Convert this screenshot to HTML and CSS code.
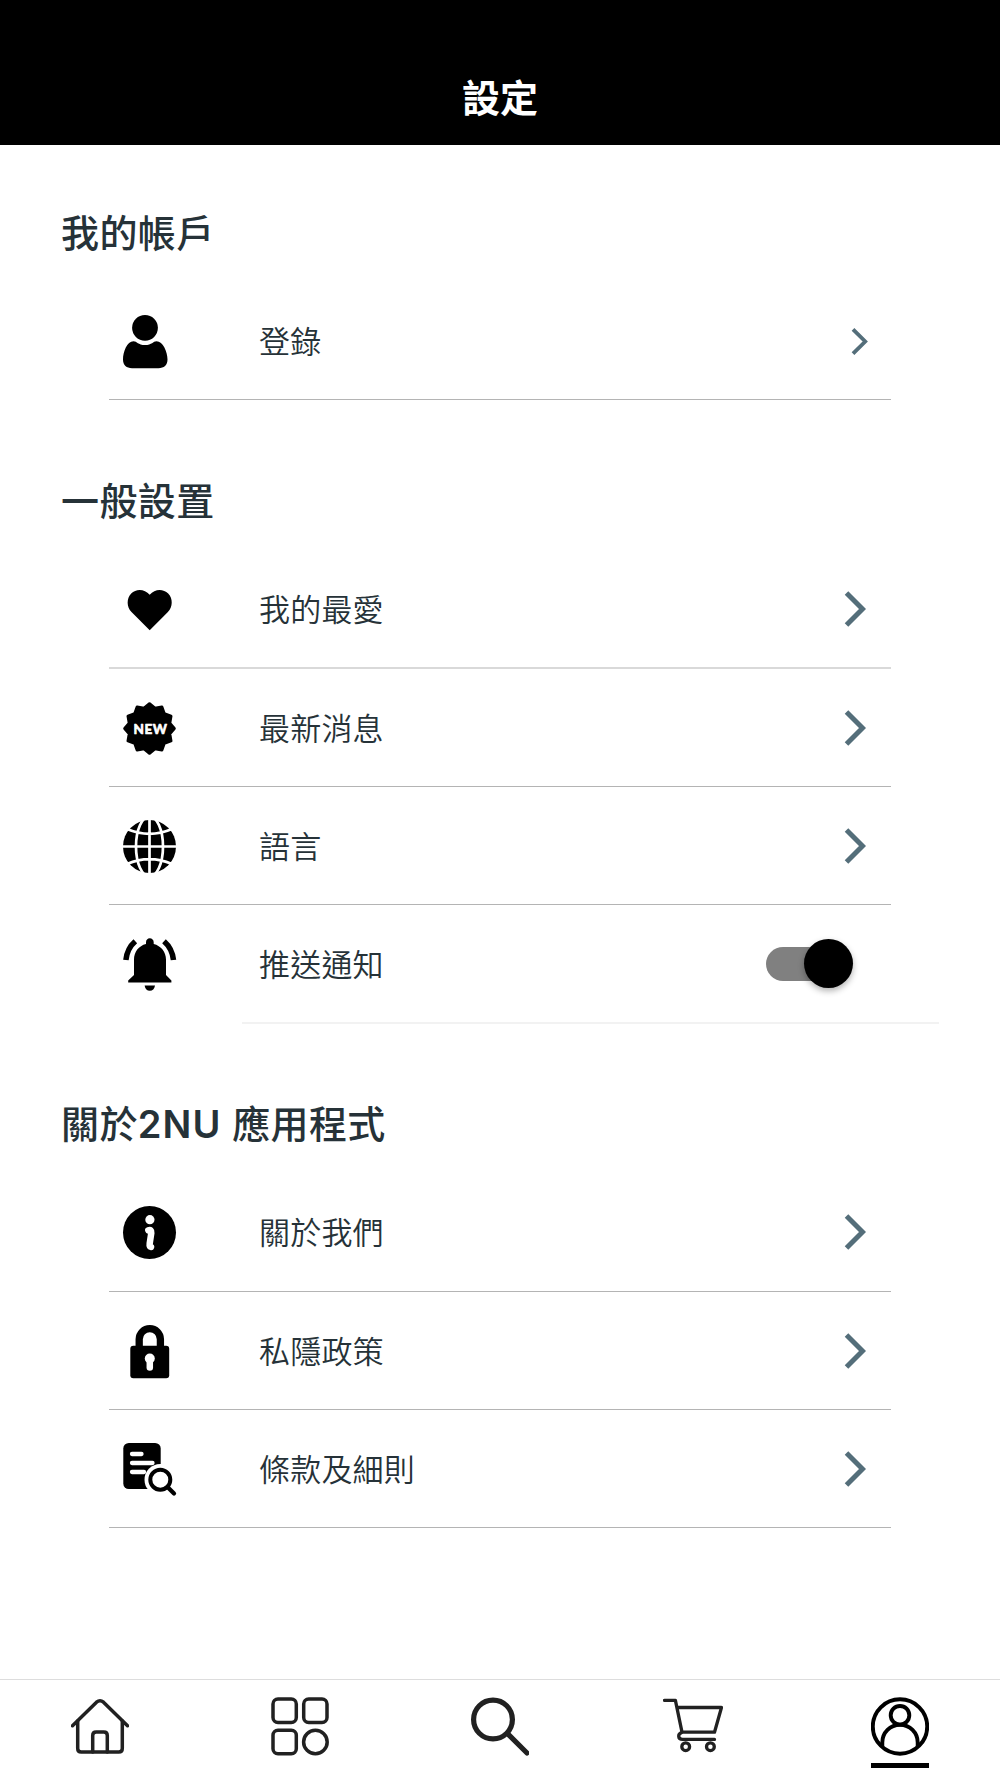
FILE: index.html
```html
<!DOCTYPE html>
<html lang="zh-Hant">
<head>
    <meta charset="UTF-8">
    <meta name="viewport" content="width=device-width, initial-scale=1.0">
    <title>設定</title>
    <link rel="stylesheet" href="styles.css">
</head>
<body>
    <header class="header">
        <h1>設定</h1>
    </header>

    <main class="content">
        <section class="group">
            <h2>我的帳戶</h2>
            <a class="row">
                <svg class="icon" viewBox="0 0 53 53">
                    <ellipse cx="22" cy="12.8" rx="12.9" ry="12.9"/>
                    <path d="M10.500 26.200C14 26.200 15 30 22 30S30 26.200 33.500 26.200C40 26.200 44.500 37 44.500 44.500C44.500 50 41 53.200 35.500 53.200H9C3.500 53.200 0 50 0 44.500C0 37 4 26.200 10.500 26.200Z"/>
                </svg>
                <span class="label">登錄</span>
                <svg class="chevron small" viewBox="0 0 22 38"><path d="M2.500 3L18.500 19L2.500 35"/></svg>
            </a>
        </section>

        <section class="group">
            <h2>一般設置</h2>
            <a class="row soft">
                <svg class="icon" viewBox="0 0 53 53">
                    <path d="M26.700 47.300L8.500 29C3.500 24 3.400 15.500 8.200 10.500S21.500 5.600 26.700 11.700C31.900 5.600 40.300 5.600 45.200 10.500S49.900 24 44.900 29Z"/>
                </svg>
                <span class="label">我的最愛</span>
                <svg class="chevron" viewBox="0 0 22 38"><path d="M2.500 3L18.500 19L2.500 35"/></svg>
            </a>
            <a class="row">
                <svg class="icon" viewBox="0 0 53 53">
                    <polygon class="badge" points="26.5,1.7 31.9,6.2 38.9,5 41.3,11.700 48,14.100 46.800,21.100 51.300,26.500 46.800,31.900 48,38.900 41.300,41.300 38.900,48 31.900,46.800 26.500,51.300 21.100,46.800 14.100,48 11.700,41.300 5,38.900 6.200,31.900 1.700,26.500 6.200,21.100 5,14.100 11.700,11.700 14.100,5 21.100,6.200"/>
                    <text class="badge-text" x="10.500" y="31.500">NEW</text>
                </svg>
                <span class="label">最新消息</span>
                <svg class="chevron" viewBox="0 0 22 38"><path d="M2.500 3L18.500 19L2.500 35"/></svg>
            </a>
            <a class="row">
                <svg class="icon" viewBox="0 0 53 53">
                    <circle cx="26.500" cy="26.500" r="26.500"/>
                    <g class="cut">
                        <path d="M26.500 -1V54M-1 26.500H54M4 9Q26.500 18.600 49 9M4 44Q26.500 34.400 49 44"/>
                        <ellipse cx="26.500" cy="26.500" rx="13.500" ry="30"/>
                    </g>
                </svg>
                <span class="label">語言</span>
                <svg class="chevron" viewBox="0 0 22 38"><path d="M2.500 3L18.500 19L2.500 35"/></svg>
            </a>
            <div class="row last">
                <svg class="icon" viewBox="0 0 53 53">
                    <path d="M26.800 0.300C29 0.300 30.700 2 30.700 4.200V6C38 7.800 43 14 43 21.500V37L48.400 42.600V44.500H5.200V42.600L11 37V21.500C11 14 15.700 7.800 23 6V4.200C23 2 24.600 0.300 26.800 0.300Z"/>
                    <path d="M21.600 47.400H32C31.500 50.800 29.500 52.700 26.800 52.700S22.100 50.800 21.600 47.400Z"/>
                    <path class="ring" d="M2.900 22Q4 10.500 12.300 3.200M50.500 22Q49.300 10.500 41 3.200"/>
                </svg>
                <span class="label">推送通知</span>
                <span class="switch"><span class="thumb"></span></span>
            </div>
        </section>

        <section class="group">
            <h2>關於<span class="brand">2NU</span> 應用程式</h2>
            <a class="row">
                <svg class="icon" viewBox="0 0 53 53">
                    <circle cx="26.500" cy="26.500" r="26.500"/>
                    <circle class="hole" cx="26.900" cy="13.700" r="4.600"/>
                    <path class="info-stem" d="M25.300 24.300Q28.600 23.200 28.300 27L26.700 37.500Q26.300 40.500 28 41"/>
                </svg>
                <span class="label">關於我們</span>
                <svg class="chevron" viewBox="0 0 22 38"><path d="M2.500 3L18.500 19L2.500 35"/></svg>
            </a>
            <a class="row">
                <svg class="icon" viewBox="0 0 53 53">
                    <rect x="7.300" y="20.800" width="38.900" height="32.400" rx="3"/>
                    <path class="shackle" d="M16.200 22V14.200A10.600 10.600 0 0 1 37.400 14.200V22"/>
                    <circle class="hole" cx="26.800" cy="33.500" r="5"/>
                    <path class="keyhole" d="M26.800 34V42.500"/>
                </svg>
                <span class="label">私隱政策</span>
                <svg class="chevron" viewBox="0 0 22 38"><path d="M2.500 3L18.500 19L2.500 35"/></svg>
            </a>
            <a class="row">
                <svg class="icon" viewBox="0 0 53 53">
                    <rect x="0.300" y="0" width="37.400" height="46" rx="5.500"/>
                    <path class="doc-lines" d="M9 11H18.500M9 20H29.500M9 29H21"/>
                    <circle class="hole" cx="37.300" cy="36.700" r="15.800"/>
                    <circle class="lens" cx="37.300" cy="36.700" r="10"/>
                    <path class="lens handle" d="M45 44.500L51 50.500"/>
                </svg>
                <span class="label">條款及細則</span>
                <svg class="chevron" viewBox="0 0 22 38"><path d="M2.500 3L18.500 19L2.500 35"/></svg>
            </a>
        </section>
    </main>

    <nav class="tabs">
        <a class="tab">
            <svg viewBox="0 0 58 59">
                <path d="M1.500 28.700L25.500 5.200Q29 2.200 32.500 5.200L56.500 28.700"/>
                <path d="M6.700 24V51.500Q6.700 55 10.200 55H47.800Q51.300 55 51.300 51.500V24"/>
                <path d="M21.700 55V38.500Q21.700 35 25.200 35H32.800Q36.300 35 36.300 38.500V55"/>
            </svg>
        </a>
        <a class="tab">
            <svg viewBox="0 0 58 59">
                <rect x="2" y="2" width="23.300" height="23.500" rx="5"/>
                <rect x="32.700" y="2" width="23.300" height="23.500" rx="5"/>
                <rect x="2" y="33.300" width="23.300" height="23.500" rx="5"/>
                <circle cx="44.400" cy="45" r="11.800"/>
            </svg>
        </a>
        <a class="tab">
            <svg class="search" viewBox="0 0 58 59">
                <circle cx="22" cy="22.500" r="19.400"/>
                <path d="M37.300 37.300L56 56"/>
            </svg>
        </a>
        <a class="tab">
            <svg class="cart" viewBox="-8 0 60 59">
                <path d="M-6.500 3.400H4.400L11 35.200H43.500L50.500 10.500H6"/>
                <path d="M10.500 35.600C6.500 37 6.800 42.400 11.500 42.400H43.500"/>
                <circle cx="14.700" cy="49.700" r="3.900"/>
                <circle cx="39.400" cy="49.700" r="3.900"/>
            </svg>
        </a>
        <a class="tab active">
            <svg viewBox="0 0 58 59">
                <circle cx="29" cy="29.500" r="27.200"/>
                <circle cx="29" cy="18.300" r="9.300"/>
                <path d="M11.300 49V45.500A17.700 17.700 0 0 1 46.700 45.500V49"/>
            </svg>
        </a>
    </nav>
</body>
</html>
```
FILE: styles.css
```css
* {
    box-sizing: border-box;
}

body {
    margin: 0;
    height: 1778px;
    display: flex;
    flex-direction: column;
    background-color: #fff;
    color: #263238;
    font-family: Inter, "Noto Sans CJK TC", sans-serif;
}

.header {
    height: 145px;
    padding-top: 50px;
    display: flex;
    justify-content: center;
    align-items: center;
    background-color: #000;
    color: #fff;
}

h1,
h2 {
    margin: 0;
    font-size: 38px;
    line-height: 38px;
    font-weight: 600;
}

.content {
    flex: 1;
}

.group {
    padding-top: 82px;
}

.group:first-child {
    padding-top: 69px;
}

h2 {
    margin: 0 0 30px 61px;
    font-weight: 500;
    letter-spacing: 0.4px;
}

.brand {
    font-weight: 600;
    letter-spacing: 1.1px;
}

.row {
    height: 118.250px;
    margin: 0 109px;
    padding: 1px 25px 0 14px;
    display: flex;
    align-items: center;
    border-bottom: 1px solid #b4b4b4;
}

.row.soft {
    border-bottom: 2px solid #d9d9d9;
}

/* divider of the switch row starts at the label */
.row.last {
    height: 119.250px;
    margin: 0 61px -1px 242px;
    padding: 0 86px 0 0;
    border-bottom: 2px solid #f2f2f2;
}

.row.last .icon {
    margin-left: -119px;
}

.icon {
    width: 53px;
    height: 53px;
    margin-top: 1px;
    margin-right: 83px;
    flex-shrink: 0;
    overflow: visible;
}

.label {
    flex: 1;
    padding-top: 2px;
    font-size: 31px;
    font-weight: 350;
    line-height: 40px;
    letter-spacing: 0.2px;
}

.chevron {
    width: 22px;
    height: 38px;
    fill: none;
    stroke: #546e7a;
    stroke-width: 5;
}

.chevron.small {
    width: 17px;
    height: 29px;
    margin-right: -2px;
}

.badge {
    stroke: #000;
    stroke-width: 3;
    stroke-linejoin: round;
}

.badge-text {
    fill: #fff;
    font-family: Lato, sans-serif;
    font-size: 13.500px;
    font-weight: 700;
    letter-spacing: 0.5px;
    stroke: #fff;
    stroke-width: 0.7;
    stroke-linejoin: round;
}

.cut {
    fill: none;
    stroke: #fff;
    stroke-width: 2.700;
}

.hole {
    fill: #fff;
}

.ring {
    fill: none;
    stroke: #000;
    stroke-width: 5.500;
}

.info-stem,
.keyhole,
.doc-lines {
    fill: none;
    stroke: #fff;
    stroke-width: 6.500;
    stroke-linecap: round;
}

.doc-lines {
    stroke-width: 4.300;
}

.shackle {
    fill: none;
    stroke: #000;
    stroke-width: 7.300;
}

.lens {
    fill: none;
    stroke: #000;
    stroke-width: 4;
}

.handle {
    stroke-width: 4.300;
    stroke-linecap: round;
}

.switch {
    width: 87px;
    height: 34px;
    display: flex;
    align-items: center;
    justify-content: flex-end;
    background: linear-gradient(to right, #808080, #808080) left / 70px 34px no-repeat;
    border-radius: 17px;
}

.thumb {
    width: 49px;
    height: 49px;
    flex-shrink: 0;
    border-radius: 50%;
    background-color: #000;
    box-shadow: 0 3px 6px rgba(0, 0, 0, 0.3);
}

.tabs {
    height: 99px;
    display: grid;
    grid-template-columns: repeat(5, 1fr);
    border-top: 1px solid #ddd;
}

.tab {
    display: flex;
    flex-direction: column;
    align-items: center;
    padding-top: 17px;
}

.tab svg {
    width: 58px;
    height: 59px;
    fill: none;
    stroke: #212121;
    stroke-width: 3.500;
    stroke-linecap: round;
    stroke-linejoin: round;
}

.tab .search {
    stroke-width: 5.200;
}

.tab .cart {
    width: 60px;
    margin-right: 14px;
    stroke-width: 3.300;
}

.tab.active svg {
    stroke: #000;
    stroke-width: 3.900;
    stroke-linecap: butt;
}

.tab.active::after {
    content: "";
    width: 58px;
    height: 5px;
    margin-top: 7px;
    background-color: #000;
}
```
